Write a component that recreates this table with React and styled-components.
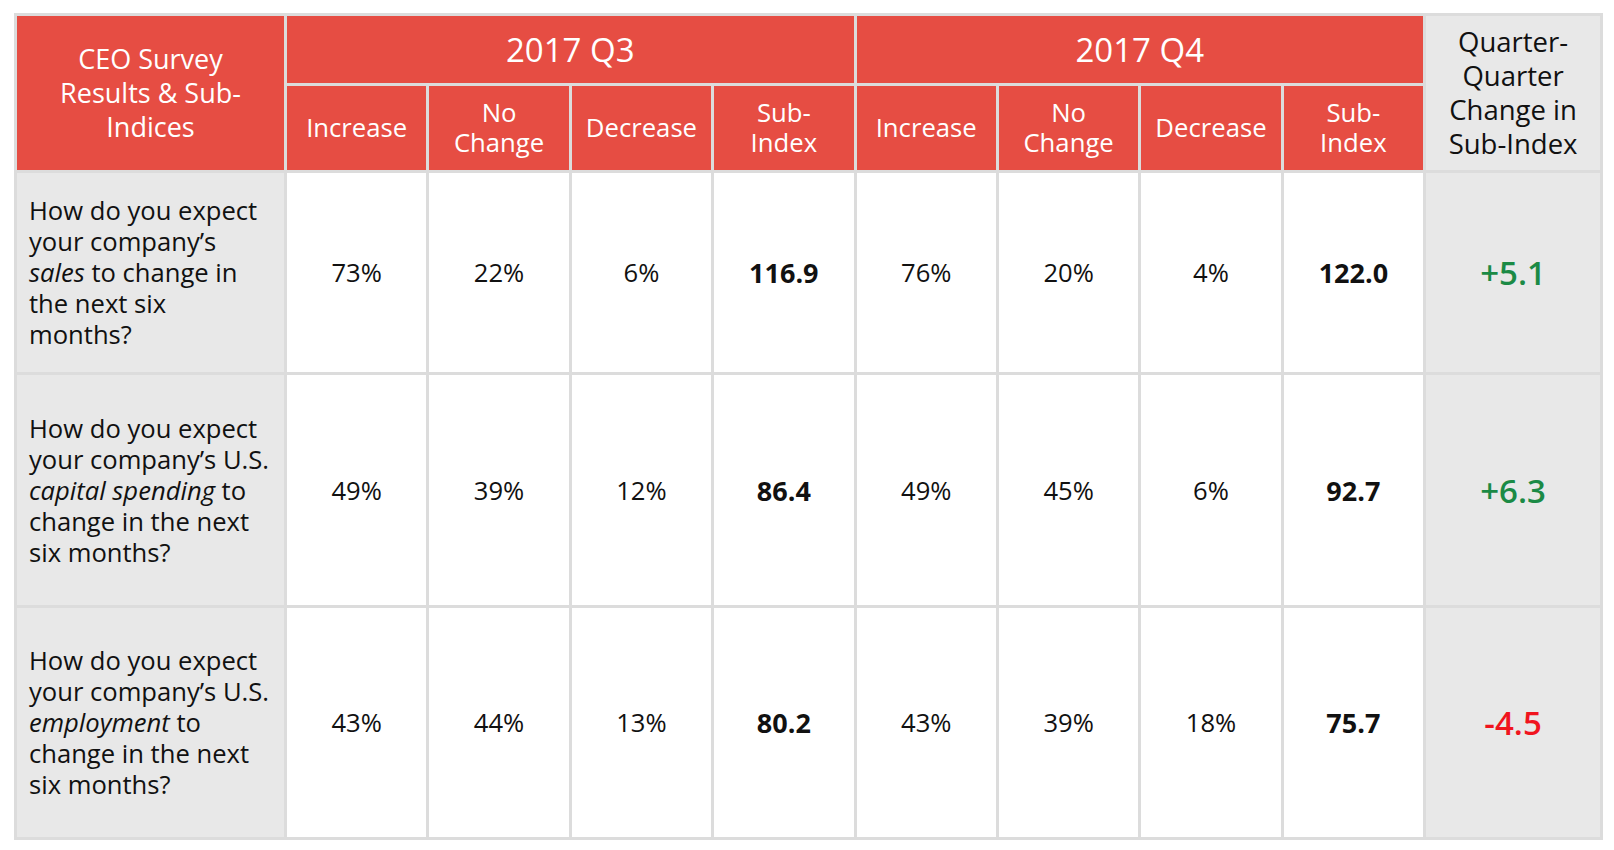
import React from 'react'
import styled, { createGlobalStyle } from 'styled-components'

const GlobalStyle = createGlobalStyle`
  html, body {
    margin: 0;
    padding: 0;
    background: #ffffff;
  }
  body {
    font-family: "Open Sans", "Liberation Sans", sans-serif;
  }
`

const Page = styled.div`
  padding: 13px 0 0 14px;
`

const Table = styled.table`
  border-collapse: collapse;
  table-layout: fixed;
  width: 1589px;
  border: 3px solid #dcdcdc;
  color: #111;
`

const HeadCell = styled.th`
  border: 3px solid #dcdcdc;
  background: ${props => (props.muted ? '#e8e8e8' : '#e64d43')};
  color: ${props => (props.muted ? '#111' : '#ffffff')};
  font-weight: 400;
  font-size: ${props => props.size || 25.7}px;
  line-height: ${props => props.lh || 30}px;
  text-align: center;
  vertical-align: middle;
  padding: 0 6px;
`

const Row = styled.tr`
  height: ${props => props.h}px;
`

const Question = styled.td`
  border: 3px solid #dcdcdc;
  background: #e8e8e8;
  font-size: 25.6px;
  line-height: 31px;
  padding: 0 8px 0 12px;
  vertical-align: middle;
  color: #111;

  em {
    font-style: italic;
  }
`

const Cell = styled.td`
  border: 3px solid #dcdcdc;
  background: #ffffff;
  text-align: center;
  vertical-align: middle;
  font-size: ${props => (props.strong ? 27 : 25.6)}px;
  font-weight: ${props => (props.strong ? 700 : 400)};
  padding: 0;
`

const Change = styled.td`
  border: 3px solid #dcdcdc;
  background: #e8e8e8;
  text-align: center;
  vertical-align: middle;
  font-size: 33px;
  font-weight: 600;
  color: ${props => (props.negative ? '#f0141e' : '#1b8a45')};
`

const subHeads = ['Increase', ['No', 'Change'], 'Decrease', ['Sub-', 'Index']]

const rows = [
  {
    h: 202,
    q: <>How do you expect<br />your company’s<br /><em>sales</em> to change in<br />the next six<br />months?</>,
    q3: ['73%', '22%', '6%', '116.9'],
    q4: ['76%', '20%', '4%', '122.0'],
    change: '+5.1',
  },
  {
    h: 233,
    q: <>How do you expect<br />your company’s U.S.<br /><em>capital spending</em> to<br />change in the next<br />six months?</>,
    q3: ['49%', '39%', '12%', '86.4'],
    q4: ['49%', '45%', '6%', '92.7'],
    change: '+6.3',
  },
  {
    h: 232,
    q: <>How do you expect<br />your company’s U.S.<br /><em>employment</em> to<br />change in the next<br />six months?</>,
    q3: ['43%', '44%', '13%', '80.2'],
    q4: ['43%', '39%', '18%', '75.7'],
    change: '-4.5',
  },
]

const renderHead = (label, i) => (
  <HeadCell key={i}>
    {Array.isArray(label) ? <>{label[0]}<br />{label[1]}</> : label}
  </HeadCell>
)

const renderValues = values =>
  values.map((v, i) => (
    <Cell key={i} strong={i === 3}>{v}</Cell>
  ))

const App = () => (
  <>
    <GlobalStyle />
    <Page>
      <Table>
        <colgroup>
          <col style={{ width: 270 }} />
          {Array.from({ length: 8 }).map((_, i) => (
            <col key={i} style={{ width: 142.375 }} />
          ))}
          <col style={{ width: 177 }} />
        </colgroup>
        <thead>
          <Row h={70}>
            <HeadCell rowSpan={2} size={27} lh={34}>
              CEO Survey<br />Results &amp; Sub-<br />Indices
            </HeadCell>
            <HeadCell colSpan={4} size={33} lh={40}>2017 Q3</HeadCell>
            <HeadCell colSpan={4} size={33} lh={40}>2017 Q4</HeadCell>
            <HeadCell rowSpan={2} muted size={27.5} lh={34}>
              Quarter-<br />Quarter<br />Change in<br />Sub-Index
            </HeadCell>
          </Row>
          <Row h={87}>
            {subHeads.map(renderHead)}
            {subHeads.map((l, i) => renderHead(l, i + 4))}
          </Row>
        </thead>
        <tbody>
          {rows.map((r, i) => (
            <Row h={r.h} key={i}>
              <Question>{r.q}</Question>
              {renderValues(r.q3)}
              {renderValues(r.q4)}
              <Change negative={r.change.startsWith('-')}>{r.change}</Change>
            </Row>
          ))}
        </tbody>
      </Table>
    </Page>
  </>
)

export default App
